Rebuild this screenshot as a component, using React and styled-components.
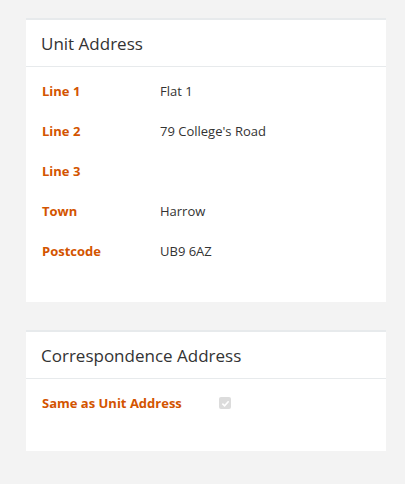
import React from 'react';
import styled, { createGlobalStyle } from 'styled-components';

const GlobalStyle = createGlobalStyle`
  body {
    margin: 0;
    background: #f3f3f3;
    font-family: "Open Sans", "Noto Sans", sans-serif;
  }
`;

const Page = styled.div`
  display: flex;
  flex-direction: column;
  gap: 28px;
  padding: 18px 19px 30px 26px;
`;

const Card = styled.section`
  background: #fff;
  border-top: 2px solid #e7eaec;
`;

const Header = styled.h2`
  margin: 0;
  height: 46px;
  display: flex;
  align-items: center;
  padding: 0 15px;
  font-size: 17px;
  font-weight: 400;
  color: #333;
  border-bottom: 1px solid #e7eaec;
`;

const Body = styled.div`
  padding: 14px 16px ${p => p.$bottom || 20}px;
  display: flex;
  flex-direction: column;
  gap: 20px;
`;

const Row = styled.div`
  display: flex;
  align-items: center;
  height: 20px;
  margin-bottom: ${p => (p.$last ? 20 : 0)}px;
  font-size: 13px;
`;

const Label = styled.span`
  width: ${p => p.$width || 118}px;
  flex-shrink: 0;
  font-weight: 700;
  color: #d35400;
`;

const Value = styled.span`
  color: #333;
`;

const Check = styled.span`
  width: 12px;
  height: 12px;
  border-radius: 2px;
  background: #dcdcdc;
  display: inline-flex;
  align-items: center;
  justify-content: center;
`;

const rows = [
  ['Line 1', 'Flat 1'],
  ['Line 2', "79 College's Road"],
  ['Line 3', ''],
  ['Town', 'Harrow'],
  ['Postcode', 'UB9 6AZ'],
];

export default function App() {
  return (
    <>
      <GlobalStyle />
      <Page>
        <Card>
          <Header>Unit Address</Header>
          <Body $bottom={21}>
            {rows.map(([k, v], i) => (
              <Row key={k} $last={i === rows.length - 1}>
                <Label>{k}</Label>
                <Value>{v}</Value>
              </Row>
            ))}
          </Body>
        </Card>
        <Card>
          <Header>Correspondence Address</Header>
          <Body $bottom={18}>
            <Row $last>
              <Label $width={177}>Same as Unit Address</Label>
              <Check>
                <svg width="9" height="9" viewBox="0 0 10 10">
                  <path d="M1.5 5.2 L4 7.5 L8.5 2.5" fill="none" stroke="#fff" strokeWidth="1.8" />
                </svg>
              </Check>
            </Row>
          </Body>
        </Card>
      </Page>
    </>
  );
}
